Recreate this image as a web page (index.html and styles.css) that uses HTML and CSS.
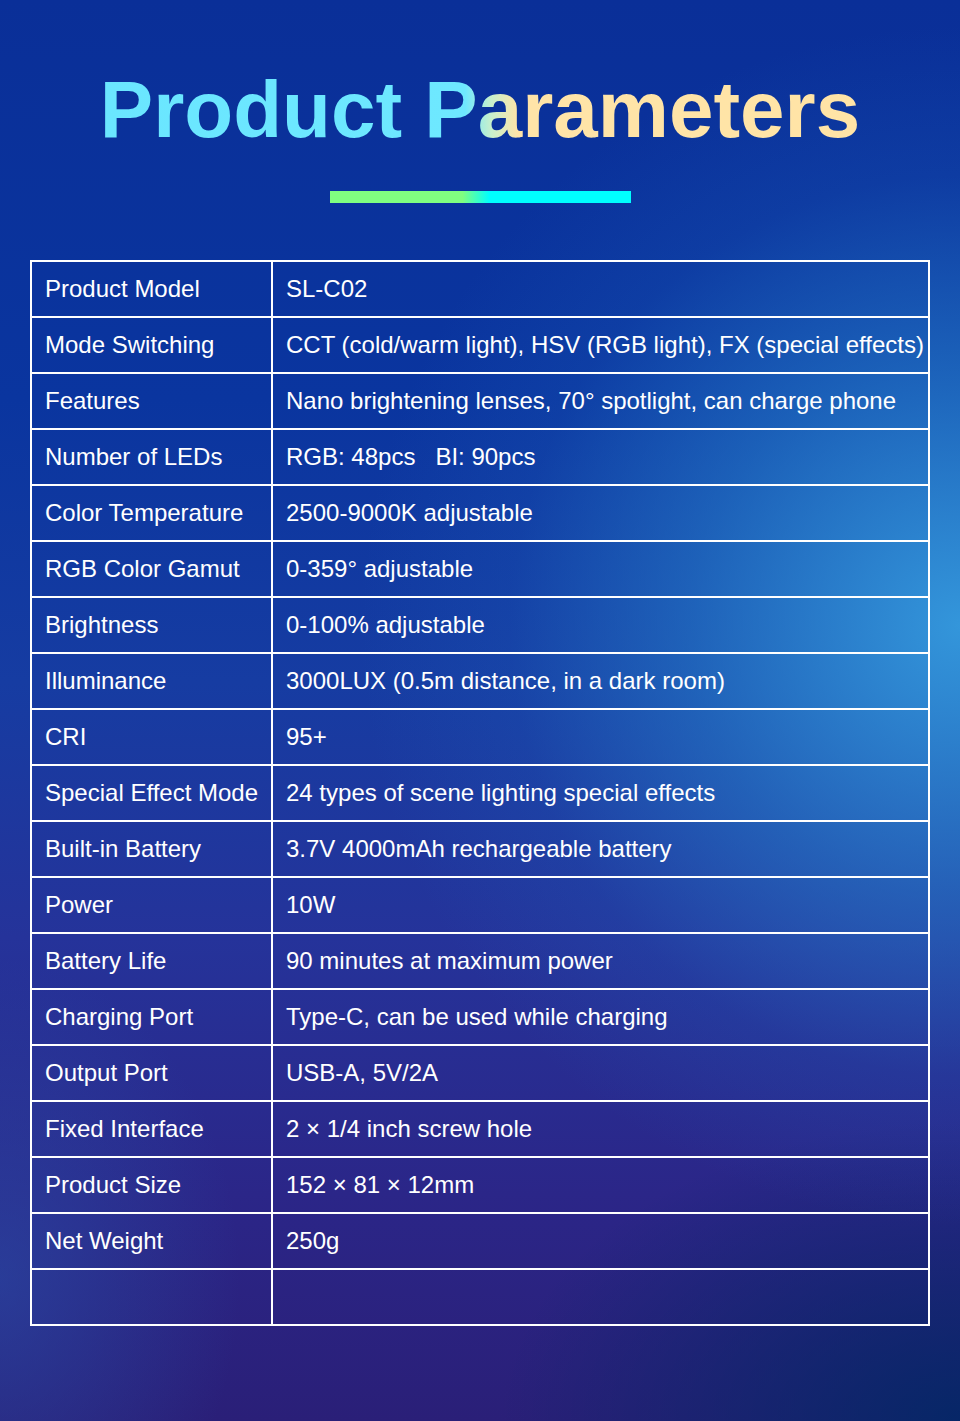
FILE: index.html
```html
<!DOCTYPE html>
<html lang="en">
<head>
<meta charset="utf-8">
<title>Product Parameters</title>
<link rel="stylesheet" href="styles.css">
</head>
<body>
<div class="page">
  <header class="head">
    <h1 class="title">Product Parameters</h1>
    <div class="bar"></div>
  </header>
  <table class="params">
    <tbody>
      <tr><td>Product Model</td><td>SL-C02</td></tr>
      <tr><td>Mode Switching</td><td>CCT (cold/warm light), HSV (RGB light), FX (special effects)</td></tr>
      <tr><td>Features</td><td>Nano brightening lenses, 70° spotlight, can charge phone</td></tr>
      <tr><td>Number of LEDs</td><td>RGB: 48pcs&nbsp;&nbsp;&nbsp;BI: 90pcs</td></tr>
      <tr><td>Color Temperature</td><td>2500-9000K adjustable</td></tr>
      <tr><td>RGB Color Gamut</td><td>0-359° adjustable</td></tr>
      <tr><td>Brightness</td><td>0-100% adjustable</td></tr>
      <tr><td>Illuminance</td><td>3000LUX (0.5m distance, in a dark room)</td></tr>
      <tr><td>CRI</td><td>95+</td></tr>
      <tr><td>Special Effect Mode</td><td>24 types of scene lighting special effects</td></tr>
      <tr><td>Built-in Battery</td><td>3.7V 4000mAh rechargeable battery</td></tr>
      <tr><td>Power</td><td>10W</td></tr>
      <tr><td>Battery Life</td><td>90 minutes at maximum power</td></tr>
      <tr><td>Charging Port</td><td>Type-C, can be used while charging</td></tr>
      <tr><td>Output Port</td><td>USB-A, 5V/2A</td></tr>
      <tr><td>Fixed Interface</td><td>2 × 1/4 inch screw hole</td></tr>
      <tr><td>Product Size</td><td>152 × 81 × 12mm</td></tr>
      <tr><td>Net Weight</td><td>250g</td></tr>
      <tr><td></td><td></td></tr>
    </tbody>
  </table>
</div>
</body>
</html>
```
FILE: styles.css
```css
html, body {
  margin: 0;
  padding: 0;
}
body {
  width: 960px;
  height: 1421px;
  overflow: hidden;
  font-family: "Liberation Sans", Arial, sans-serif;
  color: #fff;
  background:
    radial-gradient(ellipse 600px 600px at 100% 44%, rgba(55, 160, 225, 0.9), rgba(40, 130, 205, 0.55) 45%, rgba(30, 100, 190, 0.2) 75%, rgba(30, 100, 190, 0) 100%),
    radial-gradient(ellipse 240px 320px at 0% 90%, rgba(40, 80, 170, 0.55), rgba(40, 80, 170, 0) 100%),
    radial-gradient(ellipse 460px 300px at 100% 100%, rgba(0, 40, 100, 0.85), rgba(0, 40, 100, 0) 100%),
    linear-gradient(180deg, #0a2f98 0%, #0a359f 28%, #163ca2 48%, #25339a 66%, #2b2688 84%, #2a1f78 100%);
}
.page {
  width: 960px;
  height: 1421px;
  display: flex;
  flex-direction: column;
  align-items: center;
}
.head {
  display: flex;
  flex-direction: column;
  align-items: center;
  padding-top: 64px;
}
.title {
  margin: 0;
  font-size: 80px;
  line-height: 92px;
  font-weight: 700;
  background: linear-gradient(90deg, #6ae6ff 0%, #6ee8ff 48%, #c8f0cc 51.5%, #ffe4a8 55%, #ffe4a6 100%);
  -webkit-background-clip: text;
  background-clip: text;
  color: transparent;
  white-space: nowrap;
}
.bar {
  width: 301px;
  height: 12px;
  margin-top: 35px;
  background: linear-gradient(90deg, #80ff80 0%, #80ff80 44%, #00ffff 53%, #00ffff 100%);
}
.params {
  margin-top: 57px;
  width: 900px;
  border-collapse: collapse;
  border: 2px solid #fff;
  table-layout: fixed;
}
.params td {
  border: 2px solid #fff;
  height: 54px;
  padding: 0 0 0 13px;
  font-size: 24px;
  line-height: 28px;
  white-space: nowrap;
  vertical-align: middle;
}
.params td:first-child {
  width: 226px;
}
```
